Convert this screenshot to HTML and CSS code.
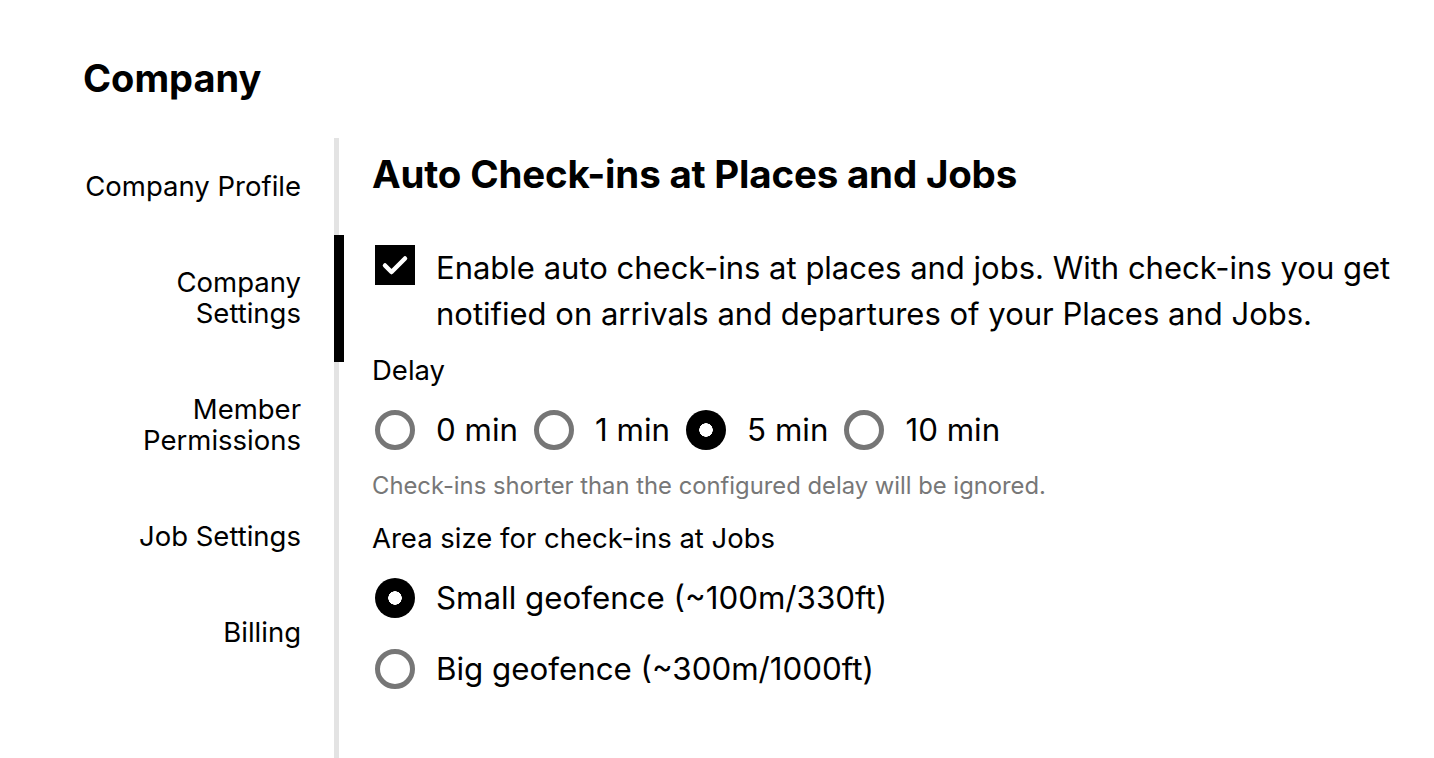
FILE: index.html
```html
<!DOCTYPE html>
<html lang="en">
<head>
    <meta charset="UTF-8">
    <meta name="viewport" content="width=device-width, initial-scale=1.0">
    <title>Company Settings</title>
    <link rel="stylesheet" href="styles.css">
</head>
<body>

    <h1 class="page-title">Company</h1>

    <div class="layout">
        <nav class="sidebar">
            <a class="nav-item" href="#">Company Profile</a>
            <a class="nav-item active" href="#">Company<br>Settings</a>
            <a class="nav-item" href="#">Member<br>Permissions</a>
            <a class="nav-item" href="#">Job Settings</a>
            <a class="nav-item" href="#">Billing</a>
        </nav>

        <main class="content">
            <h2 class="section-title">Auto Check-ins at Places and Jobs</h2>

            <label class="check-row">
                <span class="checkbox">
                    <svg viewBox="0 0 40 40" width="40" height="40">
                        <path d="M10 20.5 L16.5 27 L30 13.5" fill="none" stroke="#fff" stroke-width="4.5" stroke-linecap="round" stroke-linejoin="round"/>
                    </svg>
                </span>
                <span class="check-text">Enable auto check-ins at places and jobs. With check-ins you get notified on arrivals and departures of your Places and Jobs.</span>
            </label>

            <div class="field-label">Delay</div>
            <div class="radio-row">
                <label class="radio-option"><span class="radio"></span>0 min</label>
                <label class="radio-option"><span class="radio"></span>1 min</label>
                <label class="radio-option"><span class="radio checked"></span>5 min</label>
                <label class="radio-option"><span class="radio"></span>10 min</label>
            </div>
            <p class="hint">Check-ins shorter than the configured delay will be ignored.</p>

            <div class="field-label area-label">Area size for check-ins at Jobs</div>
            <div class="radio-list">
                <label class="radio-option"><span class="radio checked"></span>Small geofence (~100m/330ft)</label>
                <label class="radio-option"><span class="radio"></span>Big geofence (~300m/1000ft)</label>
            </div>
        </main>
    </div>

</body>
</html>
```

FILE: styles.css
```css
/* 顏色與字體 */
:root {
    --text-color: #000;
    --muted-color: #777;
    --line-color: #e3e3e3;
    --radio-border: #767676;
    --font-family: 'Inter', 'Liberation Sans', Arial, sans-serif;
}

* {
    margin: 0;
    padding: 0;
    box-sizing: border-box;
}

body {
    font-family: var(--font-family);
    color: var(--text-color);
    background: #fff;
    height: 758px;
    overflow: hidden;
}

/* 頁面標題 */
.page-title {
    font-size: 38px;
    font-weight: 700;
    line-height: 44px;
    margin: 56px 0 0 83px;
}

.layout {
    display: flex;
    margin-top: 38px;
    min-height: 620px;
}

/* 側邊選單 */
.sidebar {
    width: 339px;
    border-right: 5px solid var(--line-color);
    display: flex;
    flex-direction: column;
    padding-right: 33px;
}

.nav-item {
    position: relative;
    display: block;
    text-align: right;
    color: var(--text-color);
    text-decoration: none;
    font-size: 27.5px;
    line-height: 31px;
    padding: 32.5px 0;
}

.nav-item:first-child {
    padding-top: 33px;
}

.nav-item.active::after {
    content: '';
    position: absolute;
    top: 0;
    bottom: 0;
    right: -43px;
    width: 10px;
    background: #000;
}

/* 主要內容 */
.content {
    padding-left: 33px;
    padding-top: 16px;
}

.section-title {
    font-size: 38.5px;
    font-weight: 700;
    line-height: 40px;
    letter-spacing: -0.2px;
}

.check-row {
    display: flex;
    align-items: flex-start;
    gap: 21px;
    margin-top: 51px;
    cursor: pointer;
}

.checkbox {
    flex: none;
    width: 40px;
    height: 40px;
    margin-left: 3px;
    background: #000;
    display: flex;
}

.check-text {
    font-size: 31px;
    line-height: 46px;
    max-width: 990px;
}

.field-label {
    font-size: 27.5px;
    line-height: 30px;
    margin-top: 18px;
}

.radio-row {
    display: flex;
    margin-top: 25px;
}

.radio-row .radio-option {
    margin-right: 13px;
}

.radio-option {
    display: flex;
    align-items: center;
    gap: 21px;
    font-size: 31.3px;
    line-height: 40px;
    cursor: pointer;
}

.radio {
    flex: none;
    width: 40px;
    height: 40px;
    margin-left: 3px;
    border-radius: 50%;
    border: 5px solid var(--radio-border);
    background: #fff;
}

.radio.checked {
    border: none;
    background: radial-gradient(circle, #fff 0 6.5px, #000 7px);
}

.hint {
    font-size: 23.8px;
    line-height: 26px;
    color: var(--muted-color);
    margin-top: 23px;
}

.area-label {
    margin-top: 24px;
}

.radio-list {
    display: flex;
    flex-direction: column;
    gap: 31px;
    margin-top: 25px;
}
```
